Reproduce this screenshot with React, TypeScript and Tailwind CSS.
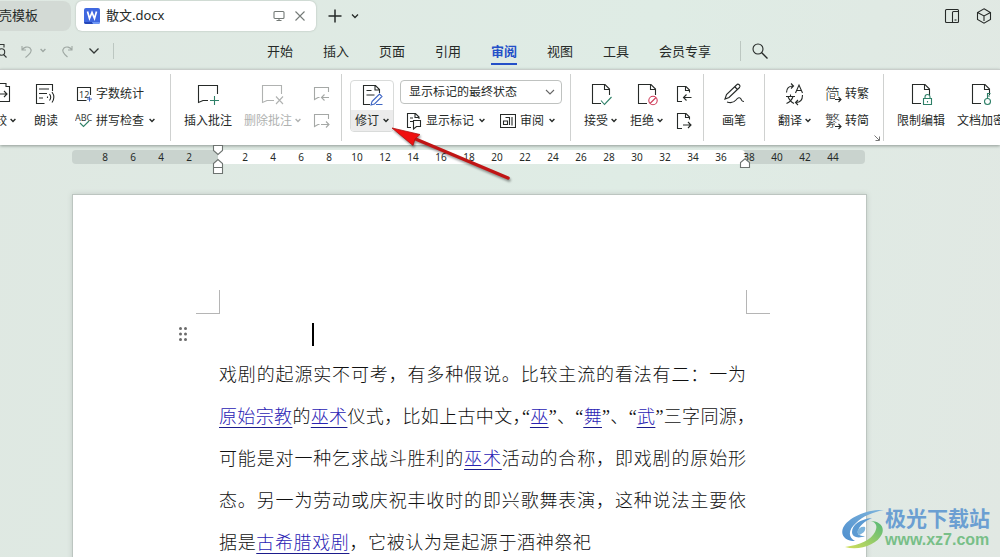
/**
 * Word processor window: document tabs, menu row, review ribbon, ruler and
 * the page being edited.
 */
import type { ReactNode } from 'react'
import clsx from 'clsx'

const MENUS = ['开始', '插入', '页面', '引用', '审阅', '视图', '工具', '会员专享']
const RULER = [8, 6, 4, 2, 0, 2, 4, 6, 8, 10, 12, 14, 16, 18, 20, 22, 24, 26, 28, 30, 32, 34, 36, 38, 40, 42, 44]

const INK = '#333836'
const GREEN = '#2f8068'
const BLUE = '#3f66c4'
const RED = '#cf3a58'

function Svg({ w, h, children, className }: { w: number; h: number; children: ReactNode; className?: string }) {
  return (
    <svg
      width={w}
      height={h}
      viewBox={`0 0 ${w} ${h}`}
      fill="none"
      stroke="currentColor"
      strokeWidth="1.1"
      aria-hidden="true"
      className={clsx('shrink-0', className)}
    >
      {children}
    </svg>
  )
}

function Chevron({ className }: { className?: string }) {
  return (
    <Svg w={6} h={5} className={className}>
      <path d="M.6 1 3 3.4 5.4 1" strokeWidth="1.4" />
    </Svg>
  )
}

/** Sheet with a folded corner; `children` is the badge on its lower right. */
function DocIcon({ children }: { children: ReactNode }) {
  return (
    <Svg w={24} h={24}>
      <path d="M12 21.5H3.5v-19H16l4.5 4.5V13M15.5 2.5v5h5" />
      {children}
    </Svg>
  )
}

function SmallDocIcon({ back }: { back?: boolean }) {
  return (
    <Svg w={16} h={18}>
      <path d="M6 16.500H1.500v-15H10l3.500 3.500v2.500M9.500 1.500v4h4" />
      {back ? <path d="M15.500 12.500h-8M10.500 9.500l-3 3 3 3" /> : <path d="M7 13h8M12 10l3 3-3 3" />}
    </Svg>
  )
}

function BubbleArrowIcon({ back }: { back?: boolean }) {
  return (
    <Svg w={17} h={16}>
      <path d="M15.500 6V1.500h-14v12L5 11.500h1.500" />
      {back ? <path d="M16 11.500H8.500M11.500 8.500l-3 3 3 3" /> : <path d="M8 11.500h8M13 8.500l3 3-3 3" />}
    </Svg>
  )
}

function Group({ className, children }: { className: string; children: ReactNode }) {
  return <div className={clsx('relative flex shrink-0 pt-[10px]', className)}>{children}</div>
}

function Divider() {
  return <div className="my-1 w-px shrink-0 bg-[#cfd1d0]" />
}

function BigButton({
  icon,
  label,
  menu,
  disabled
}: {
  icon: ReactNode
  label: string
  menu?: boolean
  disabled?: boolean
}) {
  return (
    <button
      type="button"
      disabled={disabled}
      className={clsx('flex shrink-0 flex-col items-center self-start', disabled ? 'text-[#b0b2b1]' : 'text-[#262a28]')}
    >
      <span className="flex h-[27px] items-center">{icon}</span>
      <span className="flex h-[27px] items-center gap-[3px] whitespace-nowrap">
        {label}
        {menu && <Chevron />}
      </span>
    </button>
  )
}

function RowButton({ icon, label, menu }: { icon: ReactNode; label: string; menu?: boolean }) {
  return (
    <button type="button" className="flex h-[27px] items-center whitespace-nowrap">
      <span className="mr-1 flex w-4 justify-center">{icon}</span>
      {label}
      {menu && <Chevron className="ml-[5px]" />}
    </button>
  )
}

function GlyphIcon({ glyph }: { glyph: string }) {
  return (
    <span className="relative flex h-4 w-4 items-center text-[15px] font-light leading-none" aria-hidden="true">
      {glyph}
      <Svg w={7} h={7} className="absolute -right-px -bottom-px bg-white">
        <path d="M0 3.500h6M3.500 1 6 3.500 3.500 6" />
      </Svg>
    </span>
  )
}

function TitleBar() {
  return (
    <div className="flex h-8 shrink-0 items-center">
      <button
        type="button"
        className="-ml-4 flex h-[30px] w-[87px] shrink-0 items-center rounded-r-lg bg-[#d3dad5] pl-[2px] text-[13px]"
      >
        稻壳模板
      </button>
      <div className="ml-[5px] flex h-[30px] w-[240px] shrink-0 items-center rounded-md bg-white pl-2 pr-[10px] shadow-[0_0_2px_#a9b3ad]">
        <Svg w={16} h={16}>
          <rect width="16" height="16" rx="2" fill="#3f68e0" stroke="none" />
          <path d="M0 14h8l2 2H2a2 2 0 0 1-2-2z" fill="#2546b8" stroke="none" />
          <path d="M8 14h8a2 2 0 0 1-2 2H9z" fill="#6f98f5" stroke="none" />
          <path d="m3.500 3.500 2 7 2.500-6 2.500 6 2-7" stroke="#fff" strokeWidth="1.7" />
        </Svg>
        <span className="ml-[6px] flex-1 text-[13px]">散文.docx</span>
        <button type="button" aria-label="窗口" className="text-[#747a77]">
          <Svg w={12} h={12}>
            <rect x="1" y="1.5" width="10" height="7" rx="1" />
            <path d="M6 8.500v2M3.500 10.500h5" />
          </Svg>
        </button>
        <button type="button" aria-label="关闭" className="ml-[9px] text-[#747a77]">
          <Svg w={12} h={12}>
            <path d="m1.500 1.500 9 9M10.500 1.500l-9 9" />
          </Svg>
        </button>
      </div>
      <button type="button" aria-label="新建" className="ml-3">
        <Svg w={14} h={14}>
          <path d="M7 .5v13M.5 7h13" strokeWidth="1.5" />
        </Svg>
      </button>
      <button type="button" aria-label="标签列表" className="ml-[9px]">
        <Svg w={8} h={6}>
          <path d="m1 1.500 3 3 3-3" strokeWidth="1.3" />
        </Svg>
      </button>
      <div className="ml-auto mr-2 flex items-center gap-4">
        <button type="button" aria-label="并排">
          <Svg w={16} h={16}>
            <path d="M8.500 14.500h-6a1 1 0 0 1-1-1v-11a1 1 0 0 1 1-1h11a1 1 0 0 1 1 1v11a1 1 0 0 1-1 1h-5v-10a1 1 0 0 1 1-1h5" />
            <path d="M10.500 12h2" />
          </Svg>
        </button>
        <button type="button" aria-label="应用">
          <Svg w={16} h={16}>
            <path d="m8 .8 6.500 3.700v7L8 15.200l-6.500-3.700v-7zM1.500 4.500 8 8l6.500-3.500M8 8v5" />
          </Svg>
        </button>
      </div>
    </div>
  )
}

function MenuBar() {
  return (
    <div className="flex h-[37px] shrink-0 items-center">
      <div className="flex w-[114px] shrink-0 items-center text-[#9fa8a3]">
        <button type="button" aria-label="打印预览" className="-ml-2 text-[#333836]">
          <Svg w={16} h={16}>
            <path d="M2 1.500h10v3M2 1.500v13h4" />
            <circle cx="9.5" cy="9" r="3.2" />
            <path d="m11.500 11.500 3 3" />
          </Svg>
        </button>
        <button type="button" aria-label="撤销" className="ml-3">
          <Svg w={14} h={14}>
            <path d="M2 2v4h4M2 6c2-3 5.500-4 8-2 2.500 2.500 1 5-4.500 9.500" />
          </Svg>
        </button>
        <Chevron className="ml-[6px]" />
        <button type="button" aria-label="恢复" className="ml-[15px]">
          <Svg w={14} h={14}>
            <path d="M11 2v4H7M11 6C9 3 5.500 2 3 4c-2.500 2.500-1 5 3.500 9" />
          </Svg>
        </button>
        <button type="button" aria-label="更多" className="ml-[13px] text-[#333836]">
          <Svg w={12} h={8}>
            <path d="M1.500 1.500 6 6l4.500-4.500" strokeWidth="1.3" />
          </Svg>
        </button>
        <span className="ml-auto h-4 w-px bg-[#bcc7c1]" />
      </div>
      <nav className="ml-[153px] flex h-full shrink-0 items-center gap-[30px] text-[13px]">
        {MENUS.map((m) => (
          <button
            key={m}
            type="button"
            className={clsx(
              'h-7 border-y-2 border-t-transparent leading-6',
              m === '审阅' ? 'border-b-[#2450c8] font-bold text-[#2450c8]' : 'border-b-transparent'
            )}
          >
            {m}
          </button>
        ))}
      </nav>
      <span className="ml-[29px] h-5 w-px bg-[#bcc7c1]" />
      <button type="button" aria-label="搜索" className="ml-[11px]">
        <Svg w={16} h={16}>
          <circle cx="6" cy="6" r="5" />
          <path d="m9.500 9.500 6 6" strokeWidth="1.3" />
        </Svg>
      </button>
    </div>
  )
}

function Ribbon() {
  return (
    <div className="relative z-10 flex h-[76px] shrink-0 border-t border-[#c9cecb] bg-white text-[12px] leading-none text-[#262a28] shadow-[0_1px_3px_#8f9994]">
      <Group className="-ml-[17px] w-[187px] gap-[18px]">
        <BigButton
          icon={
            <Svg w={24} h={24}>
              <path d="M8 4H3v17h9M9 1.500h9v3h3.500v15H9M9 12h10M16 9l3 3-3 3" />
            </Svg>
          }
          label="比较"
          menu
        />
        <BigButton
          icon={
            <Svg w={24} h={24}>
              <path d="M18.500 9V2.500h-16v19h8M5 7h10M5 11.500h8M5 16h4" />
              <path d="M13.500 14.500v1.500M15.500 12c1.500 2 1.500 4.500 0 6.500M18 10c2.500 3.500 2.500 7 0 10.500" />
            </Svg>
          }
          label="朗读"
        />
        <div>
          <RowButton
            icon={
              <Svg w={16} h={16}>
                <path d="M10.500 14.500h-9v-13h13V9" />
                <text x="3" y="11.500" fontSize="9" fill={INK} stroke="none" fontFamily="Noto Sans">
                  12
                </text>
                <path d="M13.500 10.500v5M11 13h5" stroke={BLUE} />
              </Svg>
            }
            label="字数统计"
          />
          <RowButton
            icon={
              <Svg w={18} h={15}>
                <text x="0" y="7.5" fontSize="9" fill={INK} stroke="none" fontFamily="Noto Sans">
                  ABC
                </text>
                <path d="m5 10 3.500 3.500L14 8" stroke={GREEN} />
              </Svg>
            }
            label="拼写检查"
            menu
          />
        </div>
      </Group>
      <Divider />
      <Group className="w-[170px] gap-3 pl-[13px]">
        <BigButton
          icon={
            <Svg w={24} h={24}>
              <path d="M21.500 12V3.500h-19v17L7 18.500h5" />
              <path d="M18.500 14v9M14 18.500h9" stroke={GREEN} />
            </Svg>
          }
          label="插入批注"
        />
        <BigButton
          disabled
          icon={
            <Svg w={24} h={24}>
              <path d="M20.500 12V3.500h-19v17L6 18.500h7" />
              <path d="m15 14.500 7 7.500M22 14.500 15 22" />
            </Svg>
          }
          label="删除批注"
          menu
        />
        <div className="flex flex-col text-[#a5a8a6]">
          <button type="button" aria-label="上一条批注" disabled className="flex h-[27px] items-center">
            <BubbleArrowIcon back />
          </button>
          <button type="button" aria-label="下一条批注" disabled className="flex h-[27px] items-center">
            <BubbleArrowIcon />
          </button>
        </div>
      </Group>
      <Divider />
      <Group className="w-[228px] gap-[6px] pl-2">
        <button
          type="button"
          className="flex h-[52px] w-11 shrink-0 flex-col overflow-hidden rounded border border-[#d9dbda] bg-white"
        >
          <span className="flex h-[29px] w-full items-center justify-center">
            <Svg w={24} h={24}>
              <path d="M10 20.500H3.500v-19h12l4 4V9M15 1.500V6h4.500M6.500 6.500h5M6.500 11h8" />
              <path d="m12 17.500 7.500-7.500 2.500 2.500-7.500 7.500-3.500 1zM16 20.500h6.500" stroke={BLUE} />
            </Svg>
          </span>
          <span className="flex w-full flex-1 items-center justify-center gap-1 bg-[#ececec]">
            修订
            <Chevron />
          </span>
        </button>
        <div>
          <div className="relative w-[162px]">
            <select
              aria-label="显示方式"
              className="h-6 w-full appearance-none rounded border border-[#bfc2c0] bg-white pl-2 text-[12px] leading-none outline-none"
            >
              <option>显示标记的最终状态</option>
            </select>
            <Svg w={10} h={7} className="pointer-events-none absolute right-[7px] top-[9px] text-[#666]">
              <path d="m1 1 4 4 4-4" />
            </Svg>
          </div>
          <div className="mt-[3px] flex gap-[15px] pl-[6px]">
            <RowButton
              icon={
                <Svg w={16} h={18}>
                  <path d="M5 15.500H1.500v-14h8L13 5v2M9 1.500v4h4M4 6h3M4 9.500h3" />
                  <path d="M7.500 8.500h7v6h-4l-3 2.500z" />
                </Svg>
              }
              label="显示标记"
              menu
            />
            <RowButton
              icon={
                <Svg w={16} h={16}>
                  <path d="M.5 1.500h15v13H.5zM12 4v8.500M3.500 8h4v3.500h-4zM5.500 4.500h4V12" />
                </Svg>
              }
              label="审阅"
              menu
            />
          </div>
        </div>
      </Group>
      <Divider />
      <Group className="w-[132px] gap-[13px] pl-[13px]">
        <BigButton
          icon={
            <DocIcon>
              <path d="m12 18.500 3.500 4 7-7.500" stroke={GREEN} />
            </DocIcon>
          }
          label="接受"
          menu
        />
        <BigButton
          icon={
            <DocIcon>
              <circle cx="18" cy="18.5" r="4.2" stroke={RED} />
              <path d="m15 21.500 6-6" stroke={RED} />
            </DocIcon>
          }
          label="拒绝"
          menu
        />
        <div className="flex flex-col">
          <button type="button" aria-label="上一条修订" className="flex h-[27px] items-center">
            <SmallDocIcon back />
          </button>
          <button type="button" aria-label="下一条修订" className="flex h-[27px] items-center">
            <SmallDocIcon />
          </button>
        </div>
      </Group>
      <Divider />
      <Group className="w-[60px] justify-center">
        <BigButton
          icon={
            <Svg w={24} h={24}>
              <path d="m3 17 1.500-4.500L14.500 3a1.800 1.800 0 0 1 3 2.500L7 15.500zM13 5l2.500 2.500" />
              <path d="M5 20c5 1.500 7 .5 9-2s4-3 5-1 .5 2.500 3 2.500" />
            </Svg>
          }
          label="画笔"
        />
      </Group>
      <Divider />
      <Group className="w-[118px] gap-[14px] pl-[13px]">
        <BigButton
          icon={
            <Svg w={24} h={24}>
              <path d="M3.500 10.500C3.500 6 6 4 10 4M8 1.500 10.500 4 8 6.500M19.500 13c0 5-2.500 7.500-6.500 7.500M15 18l-2.500 2.500L15 23" />
              <path d="m12.500 11 3.500-8 3.500 8M13.500 8.500h5" />
              <path d="M3 14.500h9M7.500 12.500v2M10 14.500c-1 3.500-3 5.500-6.500 7M5 14.500c1 3 3 5.500 6 7" />
            </Svg>
          }
          label="翻译"
          menu
        />
        <div>
          <RowButton icon={<GlyphIcon glyph="简" />} label="转繁" />
          <RowButton icon={<GlyphIcon glyph="繁" />} label="转简" />
        </div>
        <button type="button" aria-label="更多选项" className="absolute bottom-1 right-[3px] text-[#777]">
          <Svg w={6} h={6}>
            <path d="m.5.5 4.500 4.500M5.500 1.500v4h-4" strokeWidth="1" />
          </Svg>
        </button>
      </Group>
      <Divider />
      <Group className="gap-3 pl-[13px]">
        <BigButton
          icon={
            <DocIcon>
              <path d="M14.500 16.500h8v6h-8zM16 16.500V15a2.500 2.500 0 0 1 5 0v1.500M18.500 19v1.500" stroke={GREEN} />
            </DocIcon>
          }
          label="限制编辑"
        />
        <BigButton
          icon={
            <DocIcon>
              <circle cx="18.5" cy="19.5" r="3" stroke={GREEN} />
              <path d="M18.500 16.500v-5h3M18.500 14H21" stroke={GREEN} />
            </DocIcon>
          }
          label="文档加密"
        />
      </Group>
    </div>
  )
}

function Ruler() {
  return (
    <div className="relative ml-[72px] mt-[5px] grid h-[14px] w-[793px] shrink-0 font-['Noto_Sans'] text-[10px]">
      <div className="col-start-1 row-start-1 flex overflow-hidden rounded bg-[#c9d3ce]">
        <div className="ml-[146px] w-[527px] rounded-r bg-white" />
      </div>
      <div className="col-start-1 row-start-1 flex pl-[19px]">
        {RULER.map((n, i) => (
          <span key={i} className="w-7 shrink-0 text-center leading-[14px]">
            {n || ''}
          </span>
        ))}
      </div>
      {/* indent markers ride on top of the scale */}
      <Svg w={12} h={30} className="absolute -top-[5px] left-[140px] z-20 text-[#6d7370]">
        <path d="M1.500.5h9v5L6 9.500l-4.500-4zM1.500 28.500v-10L6 14.500l4.500 4v10zM1.500 22.500h9" fill="#fff" />
      </Svg>
      <Svg w={12} h={12} className="absolute left-[667px] top-[8px] text-[#6d7370]">
        <path d="M1.500 9.500v-5L6 .8l4.500 3.700v5z" fill="#fff" />
      </Svg>
    </div>
  )
}

function Link({ children }: { children: string }) {
  return (
    <a href="#" className="text-[#2a22b4] underline decoration-[#1c1c8c] decoration-1 underline-offset-4">
      {children}
    </a>
  )
}

/** Full-width comma set at half width. */
function Comma() {
  return <span className="[font-feature-settings:'halt']">，</span>
}

function Page() {
  return (
    <main className="ml-[72px] mt-[30px] w-[795px] flex-1 border border-b-0 border-[#bcc5c0] bg-white shadow-[0_0_5px_#c2ccc6]">
      <div className="ml-[123px] mt-[95px] flex h-6 w-[574px] justify-between">
        <span className="w-6 border-b border-r border-[#b5b5b5]" />
        <span className="w-6 border-b border-l border-[#b5b5b5]" />
      </div>
      <div className="flex h-10 items-center pl-[105px]">
        <Svg w={10} h={16}>
          <g fill="#6b6b6b" stroke="none">
            {[2.5, 8, 13.5].map((y) => (
              <g key={y}>
                <circle cx="2.5" cy={y} r="1.5" />
                <circle cx="7.5" cy={y} r="1.5" />
              </g>
            ))}
          </g>
        </Svg>
        <span className="ml-[124px] h-[23px] w-[2px] bg-black" />
      </div>
      <div className="ml-[146px] w-[527px] whitespace-nowrap font-['Liberation_Serif','Noto_Sans_CJK_SC',serif] text-[18px] font-light leading-[42px] text-[#111] [text-align-last:justify]">
        <p>戏剧的起源实不可考，有多种假说。比较主流的看法有二：一为</p>
        <p>
          <Link>原始宗教</Link>的<Link>巫术</Link>仪式，比如上古中文
          <Comma />“<Link>巫</Link>”、“<Link>舞</Link>”、“<Link>武</Link>”三字同源
          <Comma />
        </p>
        <p>
          可能是对一种乞求战斗胜利的<Link>巫术</Link>活动的合称，即戏剧的原始形
        </p>
        <p>态。另一为劳动或庆祝丰收时的即兴歌舞表演，这种说法主要依</p>
        <p className="w-[372px]">
          据是<Link>古希腊戏剧</Link>，它被认为是起源于酒神祭祀
        </p>
      </div>
    </main>
  )
}

function Arrow() {
  return (
    <svg
      width="124"
      height="62"
      viewBox="0 0 124 62"
      aria-hidden="true"
      className="pointer-events-none absolute left-[390px] top-[124px] z-20 drop-shadow-[1px_2px_1px_#00000066]"
    >
      <path d="M22 13.500 118 54" stroke="#c01515" strokeWidth="3.5" strokeLinecap="round" />
      <path d="m2 4 28 6.500-5 4.500-2 6.500z" fill="#f01010" stroke="#b01010" strokeWidth=".8" />
    </svg>
  )
}

function Watermark() {
  return (
    <div className="pointer-events-none absolute bottom-[6px] right-[10px] z-20 flex items-center">
      <svg width="44" height="42" viewBox="0 0 44 42" aria-hidden="true">
        <defs>
          <linearGradient id="leaf" x1="0" y1="1" x2="1" y2="0">
            <stop offset="0" stopColor="#d3df5a" />
            <stop offset="1" stopColor="#55b878" />
          </linearGradient>
          <linearGradient id="wave" x1="0" y1="1" x2="1" y2="0">
            <stop offset="0" stopColor="#4f8fce" />
            <stop offset="1" stopColor="#7db4dc" />
          </linearGradient>
        </defs>
        <path d="M43 2C27 1 7 9 2 20c-3 8 3 13 12 13C7 29 7 22 15 15 22 8 32 4 43 2z" fill="url(#wave)" />
        <path d="M31 10C19 11 11 17 11 24c0 5 6 7 13 4-6 0-8-2-7-5 1-5 7-10 14-13z" fill="#5b9ad2" />
        <path d="M16 24c1-4 5-6 8-5 1 3-1 6-6 8z" fill="#7db4dc" />
        <path d="M29 13c6 1 8 5 5 11-4 8-15 13-30 15 14 4 32-2 37-13 3-8-3-13-12-13z" fill="url(#leaf)" />
      </svg>
      <div className="flex flex-col whitespace-nowrap">
        <span className="text-[21px] font-bold leading-[22px] text-[#6b9fd2]">极光下载站</span>
        <a href="#" className="font-['Liberation_Sans',sans-serif] text-[16px] font-bold leading-[22px] text-[#78bf88]">
          www.xz7.com
        </a>
      </div>
    </div>
  )
}

export default function App() {
  return (
    <div className="relative flex h-screen flex-col overflow-hidden bg-[linear-gradient(100deg,#dfe8e2,#dfece5_60%,#e1e8e3)] font-['Noto_Sans','Noto_Sans_CJK_SC',sans-serif] text-[#262a28]">
      <TitleBar />
      <MenuBar />
      <Ribbon />
      <Ruler />
      <Page />
      <Arrow />
      <Watermark />
    </div>
  )
}
